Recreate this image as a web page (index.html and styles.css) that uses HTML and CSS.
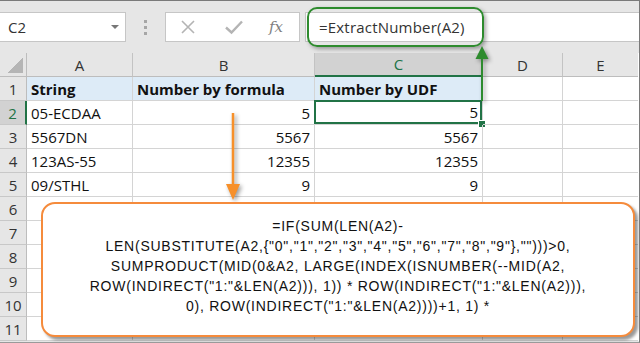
FILE: index.html
```html
<!DOCTYPE html>
<html lang="en">
<head>
    <meta charset="UTF-8">
    <title>ExtractNumber UDF</title>
    <link rel="stylesheet" href="styles.css">
</head>
<body>
    <div class="sheet">
        <div class="toolbar">
            <div class="name-box">
                <span>C2</span>
                <span class="drop"></span>
            </div>
            <div class="grip"><i></i><i></i><i></i></div>
            <div class="fx-buttons">
                <svg width="16" height="16" viewBox="0 0 16 16"><path d="M2 2L14 14M14 2L2 14" stroke="#b4b4b4" stroke-width="1.6" fill="none"/></svg>
                <svg width="18" height="16" viewBox="0 0 18 16"><path d="M1 8.5L6.5 13.5L17 2.5" stroke="#b4b4b4" stroke-width="2.4" fill="none"/></svg>
                <span class="fx">fx</span>
            </div>
            <div class="formula-bar">=ExtractNumber(A2)</div>
        </div>

        <div class="grid">
            <div class="corner"></div>
            <div class="col-head">A</div>
            <div class="col-head">B</div>
            <div class="col-head active">C</div>
            <div class="col-head">D</div>
            <div class="col-head last">E</div>

            <div class="row-head">1</div>
            <div class="cell title">String</div>
            <div class="cell title">Number by formula</div>
            <div class="cell title">Number by UDF</div>
            <div class="cell"></div>
            <div class="cell"></div>

            <div class="row-head active">2</div>
            <div class="cell">05-ECDAA</div>
            <div class="cell num">5</div>
            <div class="cell num selected">5<span class="handle"></span></div>
            <div class="cell"></div>
            <div class="cell"></div>

            <div class="row-head">3</div>
            <div class="cell">5567DN</div>
            <div class="cell num">5567</div>
            <div class="cell num">5567</div>
            <div class="cell"></div>
            <div class="cell"></div>

            <div class="row-head">4</div>
            <div class="cell">123AS-55</div>
            <div class="cell num">12355</div>
            <div class="cell num">12355</div>
            <div class="cell"></div>
            <div class="cell"></div>

            <div class="row-head">5</div>
            <div class="cell">09/STHL</div>
            <div class="cell num">9</div>
            <div class="cell num">9</div>
            <div class="cell"></div>
            <div class="cell"></div>

            <div class="row-head">6</div>
            <div class="cell"></div><div class="cell"></div><div class="cell"></div><div class="cell"></div><div class="cell"></div>
            <div class="row-head">7</div>
            <div class="cell"></div><div class="cell"></div><div class="cell"></div><div class="cell"></div><div class="cell"></div>
            <div class="row-head">8</div>
            <div class="cell"></div><div class="cell"></div><div class="cell"></div><div class="cell"></div><div class="cell"></div>
            <div class="row-head">9</div>
            <div class="cell"></div><div class="cell"></div><div class="cell"></div><div class="cell"></div><div class="cell"></div>
            <div class="row-head">10</div>
            <div class="cell"></div><div class="cell"></div><div class="cell"></div><div class="cell"></div><div class="cell"></div>
            <div class="row-head">11</div>
            <div class="cell"></div><div class="cell"></div><div class="cell"></div><div class="cell"></div><div class="cell"></div>
        </div>

        <!-- annotations drawn over the sheet -->
        <div class="formula-mark"></div>
        <svg class="arrows" width="640" height="343" viewBox="0 0 640 343">
            <g class="arrow-green">
                <line x1="482" y1="101" x2="482" y2="56" stroke="#2e8b2e" stroke-width="2"/>
                <path d="M475.5 59L482 46L488.5 59Z" fill="#2e8b2e"/>
            </g>
            <g class="arrow-orange">
                <line x1="233" y1="113" x2="233" y2="190" stroke="#f7902a" stroke-width="2.5"/>
                <path d="M226 184L233 200L240 184Z" fill="#f7902a"/>
            </g>
        </svg>
        <div class="callout">
            =IF(SUM(LEN(A2)-<br>
            LEN(SUBSTITUTE(A2,{"0","1","2","3","4","5","6","7","8","9"},"")))&gt;0,<br>
            SUMPRODUCT(MID(0&amp;A2, LARGE(INDEX(ISNUMBER(--MID(A2,<br>
            ROW(INDIRECT("1:"&amp;LEN(A2))), 1)) * ROW(INDIRECT("1:"&amp;LEN(A2))),<br>
            0), ROW(INDIRECT("1:"&amp;LEN(A2))))+1, 1) *
        </div>
    </div>
</body>
</html>
```

FILE: styles.css
```css
body {
    margin: 0;
    background-color: #ffffff;
    font-family: "Open Sans", Arial, sans-serif;
}
.sheet {
    position: relative;
    width: 640px;
    height: 343px;
    box-sizing: border-box;
    border-top: 1px solid #7a7a7a;
    border-right: 1px solid #7a7a7a;
    border-bottom: 1px solid #9a9a9a;
    background-color: #e6e6e6;
    overflow: hidden;
}
.toolbar {
    display: flex;
    align-items: flex-start;
    height: 52px;
    padding-top: 11px;
    box-sizing: border-box;
}
.name-box {
    display: flex;
    align-items: center;
    justify-content: space-between;
    width: 126px;
    height: 30px;
    box-sizing: border-box;
    padding: 0 6px 0 8px;
    background-color: white;
    border: 1px solid #c6c6c6;
    border-left: none;
    font-size: 15px;
    color: #333;
}
.drop {
    width: 0;
    height: 0;
    border-left: 4px solid transparent;
    border-right: 4px solid transparent;
    border-top: 4px solid #777;
}
.grip {
    display: flex;
    flex-direction: column;
    gap: 3px;
    width: 39px;
    align-items: center;
    padding-top: 8px;
}
.grip i {
    width: 3px;
    height: 3px;
    background-color: #a6a6a6;
}
.fx-buttons {
    display: flex;
    align-items: center;
    gap: 29px;
    width: 135px;
    height: 30px;
    box-sizing: border-box;
    padding-left: 14px;
    background-color: white;
    border: 1px solid #c6c6c6;
}
.fx {
    font-family: "DejaVu Serif", "Liberation Serif", serif;
    font-style: italic;
    font-size: 15px;
    color: #808080;
    margin-left: -3px;
}
.formula-bar {
    flex: 1;
    height: 30px;
    margin-left: 5px;
    box-sizing: border-box;
    padding-left: 13px;
    line-height: 28px;
    background-color: white;
    border: 1px solid #c6c6c6;
    border-right: none;
    font-size: 15px;
    letter-spacing: 0.2px;
    color: #333;
}
.grid {
    display: grid;
    grid-template-columns: 27px 106px 182px 168px 80px 75px;
    grid-template-rows: 24px repeat(11, 24px);
    background-color: white;
}
.corner {
    position: relative;
    background-color: #e6e6e6;
    border-right: 1px solid #bdbdbd;
    border-bottom: 1px solid #bdbdbd;
    background-image: linear-gradient(135deg, transparent 50%, #b5b5b5 50%);
    background-size: 15px 15px;
    background-position: right 3px bottom 3px;
    background-repeat: no-repeat;
}
.col-head {
    display: flex;
    align-items: center;
    justify-content: center;
    background-color: #e6e6e6;
    border-right: 1px solid #c3c3c3;
    border-bottom: 1px solid #bdbdbd;
    font-size: 15px;
    color: #333;
}
.col-head.last {
    border-right: none;
}
.col-head.active {
    background-color: #d2d2d2;
    color: #217346;
    border-bottom: 2px solid #217346;
}
.row-head {
    display: flex;
    align-items: center;
    justify-content: center;
    background-color: #e6e6e6;
    border-right: 1px solid #bdbdbd;
    border-bottom: 1px solid #c8c8c8;
    font-size: 15px;
    color: #333;
}
.row-head.active {
    background-color: #d2d2d2;
    color: #217346;
    border-right: 2px solid #217346;
}
.cell {
    position: relative;
    display: flex;
    align-items: center;
    padding: 0 4px;
    border-right: 1px solid #d4d4d4;
    border-bottom: 1px solid #d4d4d4;
    font-size: 15px;
    color: #111;
    white-space: nowrap;
}
.cell:nth-child(6n) {
    border-right: none;
}
.title {
    background-color: #ddebf7;
    font-weight: bold;
}
.num {
    justify-content: flex-end;
}
.selected {
    box-shadow: inset 0 0 0 2px #217346;
    margin: -1px 0 0 -1px;
}
.handle {
    position: absolute;
    right: -4px;
    bottom: -4px;
    width: 6px;
    height: 6px;
    background-color: #217346;
    border: 1px solid white;
}
.formula-mark {
    position: absolute;
    left: 307px;
    top: 6px;
    width: 177px;
    height: 40px;
    box-sizing: border-box;
    border: 2px solid #2e8b2e;
    border-radius: 10px;
    box-shadow: 2px 2px 4px rgba(0, 0, 0, 0.35);
}
.arrows {
    position: absolute;
    left: 0;
    top: -1px;
}
.arrow-green,
.arrow-orange {
    filter: drop-shadow(2px 2px 2px rgba(0, 0, 0, 0.4));
}
.callout {
    position: absolute;
    left: 41px;
    top: 201px;
    width: 594px;
    height: 135px;
    box-sizing: border-box;
    padding-top: 12px;
    background-color: white;
    border: 2px solid #f58b3c;
    border-radius: 14px;
    box-shadow: 3px 3px 3px rgba(0, 0, 0, 0.4);
    font-family: "Liberation Sans", Arial, sans-serif;
    font-size: 14px;
    letter-spacing: 0.75px;
    line-height: 20px;
    color: #111;
    text-align: center;
}
```
